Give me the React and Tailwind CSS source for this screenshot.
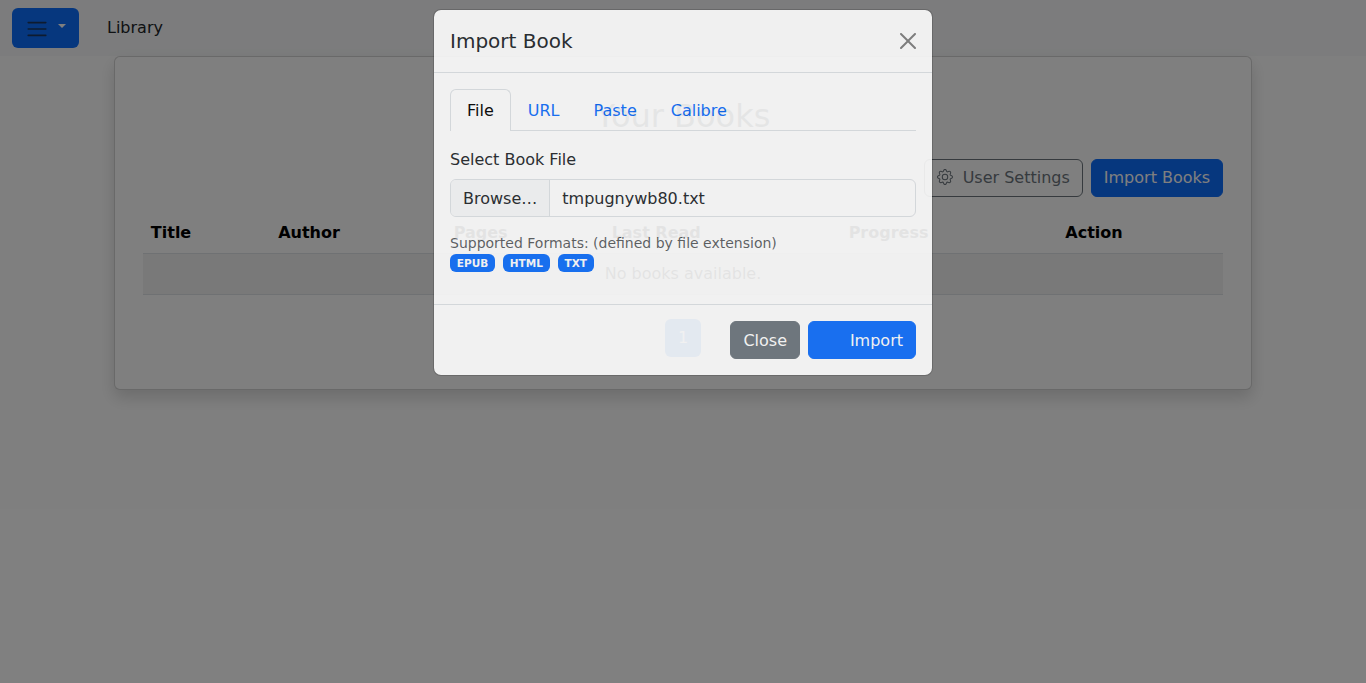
import React from "react";
import { BsGear } from "react-icons/bs";

const columns = [
  { name: "Title", width: "w-[127.3px]" },
  { name: "Author", width: "w-[175.5px]" },
  { name: "Pages", width: "w-[158px]" },
  { name: "Last Read", width: "w-[237px]" },
  { name: "Progress", width: "w-[216.7px]" },
  { name: "Action", width: "w-auto" },
];

function Navbar() {
  return (
    <nav className="flex h-14 items-center bg-[#f8f9fa] px-3">
      <button className="flex h-10 w-[67px] items-start rounded-md bg-[#0d6efd] pt-[9px] pl-[13px]">
        <svg className="size-6" viewBox="0 0 30 30" fill="none" stroke="rgba(33,37,41,0.75)" strokeWidth="2" strokeLinecap="round" strokeMiterlimit="10">
          <path d="M4 7h22M4 15h22M4 23h22" />
        </svg>
        <svg className="mt-[7px] ml-[9px] h-1 w-2" viewBox="0 0 8 4" fill="#fff">
          <path d="M0 0h8L4 4z" />
        </svg>
      </button>
      <span className="ml-7 leading-6 text-[#212529]">Library</span>
    </nav>
  );
}

function Library() {
  return (
    <main className="mx-auto h-[334px] w-5/6 rounded-md border border-black/[.175] bg-white px-7 shadow-[0_8px_16px_rgba(0,0,0,0.15)]">
      <h2 className="pt-10 text-center text-[32px] leading-[38px] text-[#212529]">Your Books</h2>
      <div className="mt-6 flex justify-end gap-2">
        <button className="flex h-[38px] items-center rounded-md border border-[#6c757d] px-3 text-[#6c757d]">
          <BsGear className="mr-[9.6px] mb-0.5 size-4" />
          User Settings
        </button>
        <button className="h-[38px] rounded-md border border-[#0d6efd] bg-[#0d6efd] px-3 text-white">Import Books</button>
      </div>
      <table className="mt-4 w-full table-fixed border-collapse text-left text-black">
        <thead>
          <tr className="h-10 border-b border-[#dee2e6]">
            {columns.map((c) => (
              <th key={c.name} className={`${c.width} px-2 pt-[7.5px] pb-0 align-top leading-6 font-bold`}>{c.name}</th>
            ))}
          </tr>
        </thead>
        <tbody>
          <tr className="h-[41px] border-b border-[#dee2e6] bg-[#f2f2f2]">
            <td colSpan={6} className="text-center leading-6">No books available.</td>
          </tr>
        </tbody>
      </table>
      <div className="mt-6 flex justify-center">
        <span className="flex h-[38px] w-9 items-center justify-center rounded-md bg-[#0d6efd] text-white">1</span>
      </div>
    </main>
  );
}

function ImportDialog() {
  return (
    <div className="w-[500px] rounded-lg border border-black/[.175] bg-white bg-clip-padding text-[#212529] opacity-[.89]">
      <header className="flex h-[63px] items-center justify-between border-b border-[#dee2e6] px-4">
        <h5 className="text-xl leading-[30px]">Import Book</h5>
        <svg className="size-4 opacity-50" viewBox="0 0 16 16" fill="#000">
          <path d="M.293.293a1 1 0 0 1 1.414 0L8 6.586 14.293.293a1 1 0 1 1 1.414 1.414L9.414 8l6.293 6.293a1 1 0 0 1-1.414 1.414L8 9.414l-6.293 6.293a1 1 0 0 1-1.414-1.414L6.586 8 .293 1.707a1 1 0 0 1 0-1.414z" />
        </svg>
      </header>
      <div className="h-[231px] p-4">
        <div className="flex h-[42px] border-b border-[#dee2e6] leading-6 text-[#0d6efd]">
          <span className="h-[42px] rounded-t-md border border-b-0 border-[#dee2e6] bg-white px-4 pt-[9px] text-black">File</span>
          <span className="px-[17px] pt-2.5">URL</span>
          <span className="px-[17px] pt-2.5">Paste</span>
          <span className="px-[17px] pt-2.5">Calibre</span>
        </div>
        <div className="mt-[17px] leading-6">Select Book File</div>
        <div className="mt-[7px] flex h-[38px] overflow-hidden rounded-md border border-[#dee2e6] leading-6">
          <span className="border-r border-[#dee2e6] bg-[#f8f9fa] px-3 pt-[7px]">Browse…</span>
          <span className="px-3 pt-[7px]">tmpugnywb80.txt</span>
        </div>
        <div className="mt-4 text-sm leading-[21px] text-[#212529]/75">Supported Formats: (defined by file extension)</div>
        <div className="flex gap-2 text-[10.5px] leading-[10.5px] font-bold text-white">
          <span className="h-[18px] rounded-md bg-[#0d6efd] px-[6.8px] py-[3.7px]">EPUB</span>
          <span className="h-[18px] rounded-md bg-[#0d6efd] px-[6.8px] py-[3.7px]">HTML</span>
          <span className="h-[18px] rounded-md bg-[#0d6efd] px-[6.8px] py-[3.7px]">TXT</span>
        </div>
      </div>
      <footer className="flex h-[71px] items-center justify-end gap-2 border-t border-[#dee2e6] px-4">
        <button className="h-[38px] rounded-md border border-[#6c757d] bg-[#6c757d] px-3 pt-0.5 text-white">Close</button>
        <button className="h-[38px] w-[108px] rounded-md border border-[#0d6efd] bg-[#0d6efd] px-3 pt-0.5 text-right text-white">Import</button>
      </footer>
    </div>
  );
}

export default function App() {
  return (
    <div className="relative h-[683px] overflow-hidden bg-white font-['DejaVu_Sans',sans-serif] text-base">
      <Navbar />
      <Library />
      <div className="absolute inset-0 bg-black/50" />
      <div className="absolute inset-0 flex items-start justify-center pt-[9px]">
        <ImportDialog />
      </div>
    </div>
  );
}
